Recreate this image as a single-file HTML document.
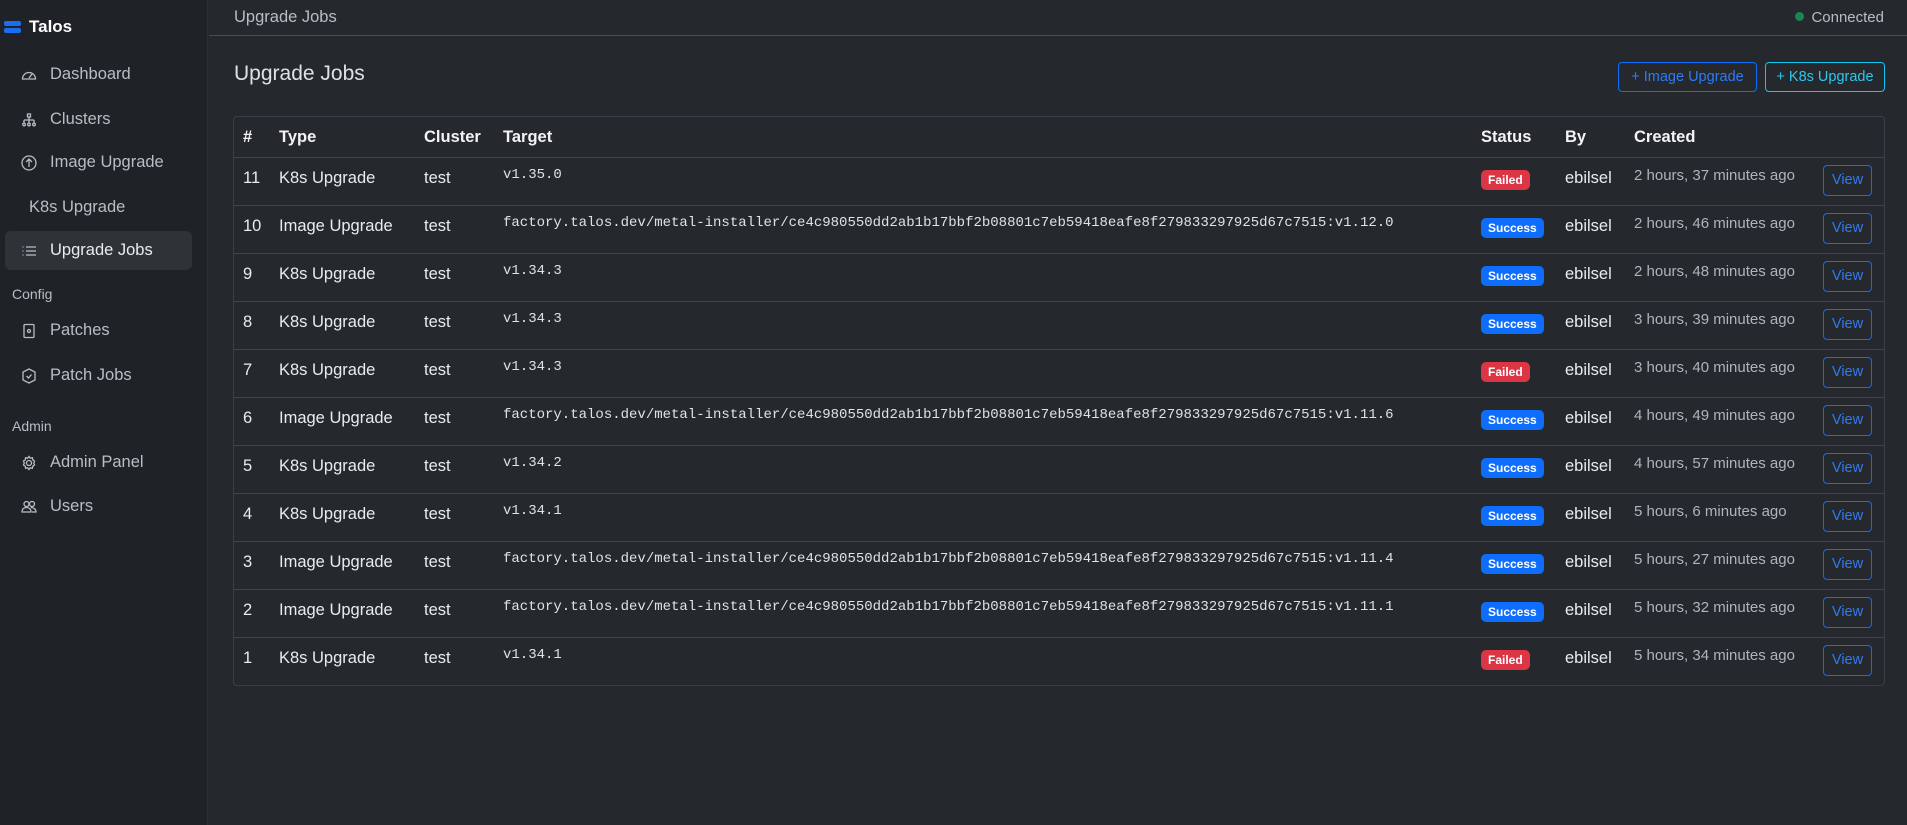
<!DOCTYPE html>
<html><head><meta charset="utf-8"><style>
*{box-sizing:border-box;margin:0;padding:0}
body{width:1907px;height:825px;overflow:hidden;background:#25282d;font-family:"Liberation Sans",sans-serif;color:#dee2e6;position:relative}
.side{position:absolute;left:0;top:0;width:208px;height:825px;background:#1f2226;border-right:1px solid #2c3035}
.brand{position:absolute;left:4px;top:17px;font-weight:bold;font-size:17px;color:#fff;display:flex;align-items:center}
.logo{width:17px;margin-right:8px}
.logo i{display:block;height:5px;background:#1a6ef0;border-radius:2px;margin:2px 0}
.item{position:absolute;left:5px;width:187px;height:39px;display:flex;align-items:center;font-size:16.5px;color:#b8bec4;border-radius:6px}
.item svg{position:absolute;left:16px;width:16px;height:16px;fill:none;stroke:#b8bec4;stroke-width:1.3}
.item span{position:absolute;left:45px}
.item.active{background:#2f3338;color:#e9ecef}
.sec{position:absolute;left:12px;font-size:14px;color:#b8bec4}
.top{position:absolute;left:209px;top:0;right:0;height:36px;border-bottom:1px solid #4a4f55}
.top .t{position:absolute;left:25px;top:8px;font-size:16.5px;color:#b8bec4}
.top .c{position:absolute;right:23px;top:9px;font-size:15px;color:#b8bec4}
.top .c b{display:inline-block;width:9px;height:9px;border-radius:50%;background:#198754;margin-right:7px;vertical-align:1px}
h1{position:absolute;left:234px;top:62px;font-size:21px;font-weight:normal;color:#dee2e6}
.btn{position:absolute;top:62px;height:30px;border:1px solid #0d6efd;border-radius:4px;color:#2f7bf5;font-size:14.5px;display:flex;align-items:center;justify-content:center}
.tbl{position:absolute;left:233px;top:116px;width:1652px;height:570px;border:1px solid #3a3f45;border-radius:4px;overflow:hidden}
.row{position:absolute;left:0;width:100%;height:48px;border-top:1px solid #40454b;font-size:16.5px;color:#e9ecef}
.row div{position:absolute;top:11px;white-space:nowrap}
.hd{position:absolute;left:0;top:0;width:100%;height:41px;font-weight:bold;font-size:16.5px;color:#f1f3f5}
.hd div{position:absolute;top:11px}
.mono{font-family:"Liberation Mono",monospace;font-size:14px;color:#dee2e6;top:9px!important}
.b{top:12px!important;height:20px;line-height:20px;padding:0 7px;border-radius:5px;font-weight:bold;font-size:12px;color:#fff}
.f{background:#dc3545}.s{background:#0d6efd}
.cr{color:#adb5bd;font-size:15px;top:9px!important}
.v{left:1589px;top:7px!important;width:49px;height:31px;border:1px solid #0d6efd;border-radius:4px;color:#2f7bf5;font-size:14.5px;text-align:center;line-height:29px}
</style></head><body>
<div class="side">
<div class="brand"><div class="logo"><i></i><i></i></div>Talos</div>
<div class="item" style="top:55px"><svg viewBox="0 0 16 16"><path d="M1.5 12a6.5 6.5 0 1113 0z"/><path d="M8 11l3-4"/></svg><span>Dashboard</span></div>
<div class="item" style="top:100px"><svg viewBox="0 0 16 16"><rect x="6.5" y="2" width="3" height="3"/><path d="M8 5v3M3 8h10M3 8v3M8 8v3M13 8v3"/><circle cx="3" cy="12.5" r="1.3"/><circle cx="8" cy="12.5" r="1.3"/><circle cx="13" cy="12.5" r="1.3"/></svg><span>Clusters</span></div>
<div class="item" style="top:143px"><svg viewBox="0 0 16 16"><circle cx="8" cy="8" r="7"/><path d="M8 12V4M5 7l3-3 3 3"/></svg><span>Image Upgrade</span></div>
<div class="item" style="top:188px"><span style="left:24px">K8s Upgrade</span></div>
<div class="item active" style="top:231px"><svg viewBox="0 0 16 16"><path d="M5 4h10M5 8h10M5 12h10M1.5 4h1M1.5 8h1M1.5 12h1"/></svg><span>Upgrade Jobs</span></div>
<div class="sec" style="top:286px">Config</div>
<div class="item" style="top:311px"><svg viewBox="0 0 16 16"><rect x="3" y="1.5" width="10" height="13" rx="1"/><circle cx="8" cy="8" r="1.5"/></svg><span>Patches</span></div>
<div class="item" style="top:356px"><svg viewBox="0 0 16 16"><path d="M8 1l6 3v8l-6 3-6-3V4z"/><path d="M5.5 8l2 2 3-3.5"/></svg><span>Patch Jobs</span></div>
<div class="sec" style="top:418px">Admin</div>
<div class="item" style="top:443px"><svg viewBox="0 0 16 16"><circle cx="8" cy="8" r="2.5"/><path d="M8 1.5l1.3 1.7 2.1-.4.4 2.1L13.5 6l-.8 2 .8 2-1.7 1.1-.4 2.1-2.1-.4L8 14.5l-1.3-1.7-2.1.4-.4-2.1L2.5 10l.8-2-.8-2 1.7-1.1.4-2.1 2.1.4z"/></svg><span>Admin Panel</span></div>
<div class="item" style="top:487px"><svg viewBox="0 0 16 16"><circle cx="5.5" cy="5" r="2.5"/><circle cx="11" cy="5" r="2.5"/><path d="M1 13c0-3 2-4.5 4.5-4.5S10 10 10 13zM10 8.5c2.5 0 5 1.5 5 4.5h-4"/></svg><span>Users</span></div>
</div>
<div class="top"><div class="t">Upgrade Jobs</div><div class="c"><b></b>Connected</div></div>
<h1>Upgrade Jobs</h1>
<div class="btn" style="left:1618px;width:139px">+ Image Upgrade</div>
<div class="btn" style="left:1765px;width:120px;border-color:#0dcaf0;color:#2cc8ee">+ K8s Upgrade</div>
<div class="tbl">
<div class="hd"><div style="left:9px">#</div><div style="left:45px">Type</div><div style="left:190px">Cluster</div><div style="left:269px">Target</div><div style="left:1247px">Status</div><div style="left:1331px">By</div><div style="left:1400px">Created</div></div>
<div class="row" style="top:40px"><div style="left:9px">11</div><div style="left:45px">K8s Upgrade</div><div style="left:190px">test</div><div class="mono" style="left:269px">v1.35.0</div><div class="b f" style="left:1247px">Failed</div><div style="left:1331px">ebilsel</div><div class="cr" style="left:1400px">2 hours, 37 minutes ago</div><div class="v">View</div></div>
<div class="row" style="top:88px"><div style="left:9px">10</div><div style="left:45px">Image Upgrade</div><div style="left:190px">test</div><div class="mono" style="left:269px">factory.talos.dev/metal-installer/ce4c980550dd2ab1b17bbf2b08801c7eb59418eafe8f279833297925d67c7515:v1.12.0</div><div class="b s" style="left:1247px">Success</div><div style="left:1331px">ebilsel</div><div class="cr" style="left:1400px">2 hours, 46 minutes ago</div><div class="v">View</div></div>
<div class="row" style="top:136px"><div style="left:9px">9</div><div style="left:45px">K8s Upgrade</div><div style="left:190px">test</div><div class="mono" style="left:269px">v1.34.3</div><div class="b s" style="left:1247px">Success</div><div style="left:1331px">ebilsel</div><div class="cr" style="left:1400px">2 hours, 48 minutes ago</div><div class="v">View</div></div>
<div class="row" style="top:184px"><div style="left:9px">8</div><div style="left:45px">K8s Upgrade</div><div style="left:190px">test</div><div class="mono" style="left:269px">v1.34.3</div><div class="b s" style="left:1247px">Success</div><div style="left:1331px">ebilsel</div><div class="cr" style="left:1400px">3 hours, 39 minutes ago</div><div class="v">View</div></div>
<div class="row" style="top:232px"><div style="left:9px">7</div><div style="left:45px">K8s Upgrade</div><div style="left:190px">test</div><div class="mono" style="left:269px">v1.34.3</div><div class="b f" style="left:1247px">Failed</div><div style="left:1331px">ebilsel</div><div class="cr" style="left:1400px">3 hours, 40 minutes ago</div><div class="v">View</div></div>
<div class="row" style="top:280px"><div style="left:9px">6</div><div style="left:45px">Image Upgrade</div><div style="left:190px">test</div><div class="mono" style="left:269px">factory.talos.dev/metal-installer/ce4c980550dd2ab1b17bbf2b08801c7eb59418eafe8f279833297925d67c7515:v1.11.6</div><div class="b s" style="left:1247px">Success</div><div style="left:1331px">ebilsel</div><div class="cr" style="left:1400px">4 hours, 49 minutes ago</div><div class="v">View</div></div>
<div class="row" style="top:328px"><div style="left:9px">5</div><div style="left:45px">K8s Upgrade</div><div style="left:190px">test</div><div class="mono" style="left:269px">v1.34.2</div><div class="b s" style="left:1247px">Success</div><div style="left:1331px">ebilsel</div><div class="cr" style="left:1400px">4 hours, 57 minutes ago</div><div class="v">View</div></div>
<div class="row" style="top:376px"><div style="left:9px">4</div><div style="left:45px">K8s Upgrade</div><div style="left:190px">test</div><div class="mono" style="left:269px">v1.34.1</div><div class="b s" style="left:1247px">Success</div><div style="left:1331px">ebilsel</div><div class="cr" style="left:1400px">5 hours, 6 minutes ago</div><div class="v">View</div></div>
<div class="row" style="top:424px"><div style="left:9px">3</div><div style="left:45px">Image Upgrade</div><div style="left:190px">test</div><div class="mono" style="left:269px">factory.talos.dev/metal-installer/ce4c980550dd2ab1b17bbf2b08801c7eb59418eafe8f279833297925d67c7515:v1.11.4</div><div class="b s" style="left:1247px">Success</div><div style="left:1331px">ebilsel</div><div class="cr" style="left:1400px">5 hours, 27 minutes ago</div><div class="v">View</div></div>
<div class="row" style="top:472px"><div style="left:9px">2</div><div style="left:45px">Image Upgrade</div><div style="left:190px">test</div><div class="mono" style="left:269px">factory.talos.dev/metal-installer/ce4c980550dd2ab1b17bbf2b08801c7eb59418eafe8f279833297925d67c7515:v1.11.1</div><div class="b s" style="left:1247px">Success</div><div style="left:1331px">ebilsel</div><div class="cr" style="left:1400px">5 hours, 32 minutes ago</div><div class="v">View</div></div>
<div class="row" style="top:520px"><div style="left:9px">1</div><div style="left:45px">K8s Upgrade</div><div style="left:190px">test</div><div class="mono" style="left:269px">v1.34.1</div><div class="b f" style="left:1247px">Failed</div><div style="left:1331px">ebilsel</div><div class="cr" style="left:1400px">5 hours, 34 minutes ago</div><div class="v">View</div></div>
</div>
</body></html>
